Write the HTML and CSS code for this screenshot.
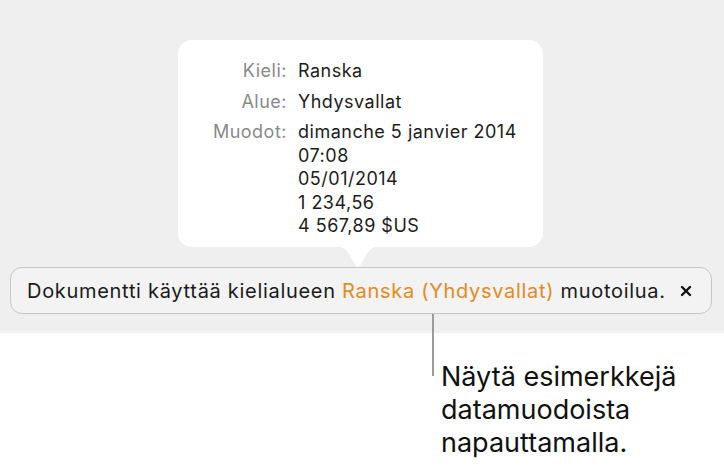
FILE: index.html
```html
<!DOCTYPE html>
<html lang="fi">
<head>
<meta charset="utf-8">
<link rel="stylesheet" href="styles.css">
</head>
<body>
<div class="stage">
  <div class="popover">
    <div class="grid">
      <div class="label">Kieli:</div>
      <div class="value">Ranska</div>
      <div class="label">Alue:</div>
      <div class="value">Yhdysvallat</div>
      <div class="label">Muodot:</div>
      <div class="value">dimanche 5 janvier 2014<br>07:08<br>05/01/2014<br>1&nbsp;234,56<br>4&nbsp;567,89 $US</div>
    </div>
    <svg class="arrow" width="36" height="20" viewBox="0 0 36 20"><path d="M0,0 C9,0 14,20 18,20 C22,20 27,0 36,0 Z" fill="#fff"/></svg>
  </div>
  <div class="bar">
    <span class="msg">Dokumentti käyttää kielialueen <span class="hl">Ranska (Yhdysvallat)</span> muotoilua.</span>
    <svg class="close" width="12" height="12" viewBox="0 0 12 12"><path d="M2,2 L10,10 M10,2 L2,10" stroke="#111" stroke-width="2.4" stroke-linecap="round"/></svg>
  </div>
</div>
<div class="leader"></div>
<p class="callout">Näytä esimerkkejä<br>datamuodoista<br>napauttamalla.</p>
</body>
</html>
```
FILE: styles.css
```css
html, body {
  margin: 0;
  padding: 0;
  background: #ffffff;
  font-family: Inter, Roboto, "Liberation Sans", sans-serif;
}
body {
  position: relative;
  width: 724px;
  height: 466px;
  overflow: hidden;
}
.stage {
  background: #efefef;
  height: 333px;
  padding-top: 40px;
  box-sizing: border-box;
}
.popover {
  position: relative;
  margin-left: 178px;
  width: 365px;
  height: 207px;
  background: #ffffff;
  border-radius: 14px;
  box-sizing: border-box;
  padding-top: 19px;
}
.grid {
  display: grid;
  grid-template-columns: 109px auto;
  column-gap: 11px;
  row-gap: 7px;
  font-size: 18px;
  line-height: 23.5px;
  letter-spacing: 0.5px;
}
.label {
  text-align: right;
  color: #8a8a8a;
}
.value {
  color: #1c1c1c;
}
.arrow {
  position: absolute;
  left: 162px;
  top: 207px;
  display: block;
}
.bar {
  margin: 20px 0 0 10px;
  width: 702px;
  height: 47px;
  box-sizing: border-box;
  border: 1px solid #c6c6c6;
  border-radius: 12px;
  background: #f3f3f3;
  display: flex;
  align-items: center;
  padding-left: 16px;
  font-size: 20px;
  letter-spacing: 0.7px;
  color: #1a1a1a;
}
.hl {
  color: #e58a1f;
}
.close {
  margin-left: 14px;
  display: block;
}
.leader {
  position: absolute;
  left: 432px;
  top: 314px;
  width: 2px;
  height: 62px;
  background: #9b9b9b;
}
.callout {
  margin: 27px 0 0 441px;
  font-size: 27px;
  line-height: 33px;
  color: #111111;
}
```
